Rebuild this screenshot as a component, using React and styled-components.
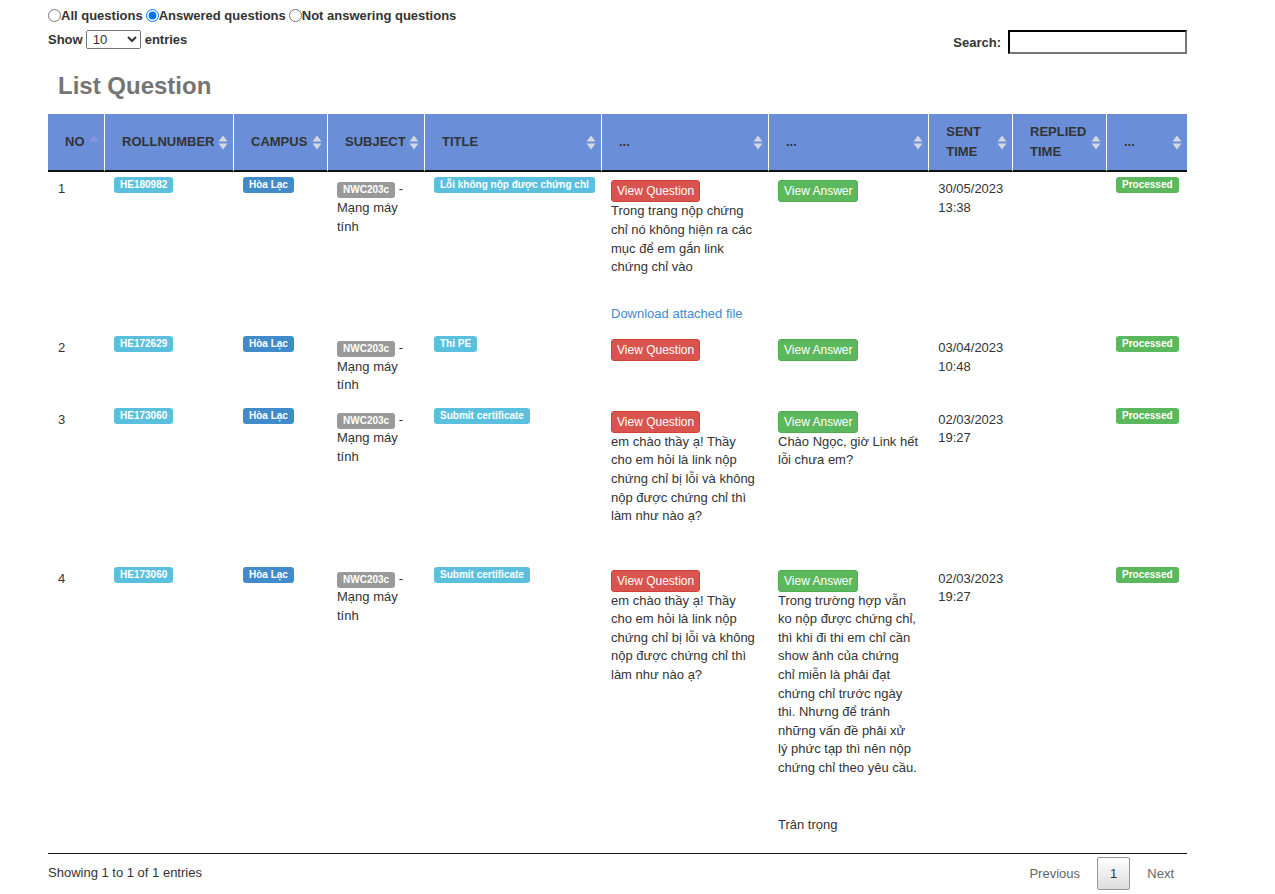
import React from 'react'
import styled, { createGlobalStyle } from 'styled-components'

const GlobalStyle = createGlobalStyle`
  body {
    margin: 0;
    background: #fff;
    color: #333;
    font-family: "Liberation Sans", Arial, sans-serif;
    font-size: 13px;
  }
`

const badgeColors = {
  info: '#5bc0de',
  primary: '#428bca',
  default: '#999999',
  success: '#5cb85c'
}

const columns = [
  { label: 'NO', width: 56, sort: 'asc' },
  { label: 'ROLLNUMBER', width: 129 },
  { label: 'CAMPUS', width: 94 },
  { label: 'SUBJECT', width: 97 },
  { label: 'TITLE', width: 177 },
  { label: '...', width: 167 },
  { label: '...', width: 160.25 },
  { label: 'SENT TIME', width: 83.75 },
  { label: 'REPLIED TIME', width: 94 },
  { label: '...', width: 81 }
]

const sameQuestion = 'em chào thầy ạ! Thầy cho em hỏi là link nộp chứng chỉ bị lỗi và không nộp được chứng chỉ thì làm như nào ạ?'

const rows = [
  {
    no: 1, roll: 'HE180982', campus: 'Hòa Lạc', subject: 'NWC203c', subjectName: 'Mạng máy tính',
    title: 'Lỗi không nộp được chứng chỉ',
    question: 'Trong trang nộp chứng chỉ nó không hiện ra các mục để em gắn link chứng chỉ vào',
    file: true, answer: '', sent: ['30/05/2023', '13:38']
  },
  {
    no: 2, roll: 'HE172629', campus: 'Hòa Lạc', subject: 'NWC203c', subjectName: 'Mạng máy tính',
    title: 'Thi PE', question: '', answer: '', sent: ['03/04/2023', '10:48']
  },
  {
    no: 3, roll: 'HE173060', campus: 'Hòa Lạc', subject: 'NWC203c', subjectName: 'Mạng máy tính',
    title: 'Submit certificate', question: sameQuestion,
    answer: 'Chào Ngọc, giờ Link hết lỗi chưa em?', sent: ['02/03/2023', '19:27']
  },
  {
    no: 4, roll: 'HE173060', campus: 'Hòa Lạc', subject: 'NWC203c', subjectName: 'Mạng máy tính',
    title: 'Submit certificate', question: sameQuestion,
    answer: 'Trong trường hợp vẫn ko nộp được chứng chỉ, thì khi đi thi em chỉ cần show ảnh của chứng chỉ miễn là phải đạt chứng chỉ trước ngày thi. Nhưng để tránh những vấn đề phải xử lý phức tạp thì nên nộp chứng chỉ theo yêu cầu.',
    signature: 'Trân trọng',
    sent: ['02/03/2023', '19:27']
  }
]

const SortIcon = ({ dir }) => (
  <SortSvg width="10" height="15" viewBox="0 0 10 15">
    <path d="M0.5 6.5 L5 0.5 L9.5 6.5 Z" fill={dir === 'asc' ? '#8e95e4' : '#d5d8df'} />
    {!dir && <path d="M0.5 8.5 L9.5 8.5 L5 14.5 Z" fill="#d5d8df" />}
  </SortSvg>
)

const App = () => (
  <>
    <GlobalStyle />
    <Page>
      <FilterRow>
        <RadioLabel><Radio type="radio" name="filter" />All questions</RadioLabel>
        <RadioLabel><Radio type="radio" name="filter" defaultChecked />Answered questions</RadioLabel>
        <RadioLabel><Radio type="radio" name="filter" />Not answering questions</RadioLabel>
      </FilterRow>

      <Controls>
        <LengthControl>
          Show
          <Select defaultValue="10">
            <option value="10">10</option>
            <option value="25">25</option>
            <option value="50">50</option>
          </Select>
          entries
        </LengthControl>
        <SearchControl>
          Search:
          <SearchInput type="search" />
        </SearchControl>
      </Controls>

      <Title>List Question</Title>

      <Table>
        <colgroup>
          {columns.map((c, i) => <col key={i} style={{ width: c.width }} />)}
        </colgroup>
        <thead>
          <tr>
            {columns.map((c, i) => (
              <Th key={i}>
                <ThInner>
                  <span>{c.label}</span>
                  <SortIcon dir={c.sort} />
                </ThInner>
              </Th>
            ))}
          </tr>
        </thead>
        <tbody>
          {rows.map(r => (
            <tr key={r.no}>
              <Td>{r.no}</Td>
              <Td><Badge $variant="info" $top>{r.roll}</Badge></Td>
              <Td><Badge $variant="primary" $top>{r.campus}</Badge></Td>
              <Td><Badge $variant="default">{r.subject}</Badge> - {r.subjectName}</Td>
              <Td><Badge $variant="info" $top>{r.title}</Badge></Td>
              <Td>
                <Stack>
                  <Button $variant="danger">View Question</Button>
                  {r.question && <QuestionText>{r.question}</QuestionText>}
                  {r.file && <FileLink href="#">Download attached file</FileLink>}
                </Stack>
              </Td>
              <Td>
                <Stack>
                  <Button $variant="success">View Answer</Button>
                  {r.answer && <AnswerText>{r.answer}</AnswerText>}
                  {r.signature && <Signature>{r.signature}</Signature>}
                </Stack>
              </Td>
              <Td><DateLine>{r.sent[0]}</DateLine><DateLine>{r.sent[1]}</DateLine></Td>
              <Td></Td>
              <Td><Badge $variant="success" $top>Processed</Badge></Td>
            </tr>
          ))}
        </tbody>
      </Table>

      <Footer>
        <Info>Showing 1 to 1 of 1 entries</Info>
        <Pagination>
          <PageButton>Previous</PageButton>
          <PageButton $current>1</PageButton>
          <PageButton>Next</PageButton>
        </Pagination>
      </Footer>
    </Page>
  </>
)

export default App

const Page = styled.div`
  width: 1139px;
  margin-left: 48px;
  padding-top: 5px;
`

const FilterRow = styled.div`
  display: flex;
  align-items: center;
  gap: 3px;
  height: 20px;
  font-weight: bold;
`

const RadioLabel = styled.label`
  display: inline-flex;
  align-items: center;
`

const Radio = styled.input`
  width: 13px;
  height: 13px;
  margin: 0;
`

const Controls = styled.div`
  display: flex;
  justify-content: space-between;
  align-items: flex-start;
  margin-top: 5px;
  font-weight: bold;
`

const LengthControl = styled.label`
  display: flex;
  align-items: center;
  gap: 3px;
  height: 18px;
`

const Select = styled.select`
  width: 55px;
  height: 19px;
  margin: 0 1px 0 0;
  font-family: inherit;
  font-size: 13px;
  color: #333;
  padding: 0 2px;
`

const SearchControl = styled.label`
  display: flex;
  align-items: center;
  gap: 7px;
`

const SearchInput = styled.input`
  width: 179px;
  height: 24px;
  box-sizing: border-box;
  margin: 0;
  border: 2px inset #767676;
  border-top-color: #222;
  border-left-color: #222;
  font-family: inherit;
  font-size: 13px;
  outline: none;
`

const Title = styled.h3`
  margin: 19px 0 15px 10px;
  font-size: 24px;
  line-height: 26.4px;
  font-weight: bold;
  color: #747474;
`

const Table = styled.table`
  width: 1139px;
  table-layout: fixed;
  border-collapse: separate;
  border-spacing: 0;
  border-bottom: 1px solid #111;
`

const Th = styled.th`
  background: #6a8fd8;
  color: #333;
  font-size: 13px;
  font-weight: bold;
  line-height: 20px;
  text-align: left;
  vertical-align: middle;
  padding: 8px 5px 8px 17px;
  border-bottom: 2px solid #111;

  & + & {
    border-left: 1px solid #fff;
  }
`

const ThInner = styled.div`
  display: flex;
  align-items: center;
  justify-content: space-between;
  gap: 3px;
`

const SortSvg = styled.svg`
  flex-shrink: 0;
  display: block;
`

const Td = styled.td`
  padding: 8px 10px;
  vertical-align: top;
  line-height: 18.57px;
  font-size: 13px;
  color: #333;
`

const Badge = styled.span`
  display: inline;
  padding: 2px 6px 3px;
  border-radius: 3px;
  background: ${p => badgeColors[p.$variant]};
  color: #fff;
  font-size: 10px;
  font-weight: bold;
  line-height: 1;
  white-space: nowrap;
  vertical-align: ${p => (p.$top ? 'top' : 'baseline')};
`

const Stack = styled.div`
  display: flex;
  flex-direction: column;
  align-items: flex-start;
`

const Button = styled.button`
  display: block;
  height: 22px;
  padding: 1px 5px;
  border: 1px solid ${p => (p.$variant === 'danger' ? '#d43f3a' : '#4cae4c')};
  border-radius: 3px;
  background: ${p => (p.$variant === 'danger' ? '#d9534f' : '#5cb85c')};
  color: #fff;
  font-family: inherit;
  font-size: 12px;
  line-height: 18px;
  cursor: pointer;
`

const QuestionText = styled.div`
  margin-bottom: 28px;
`

const AnswerText = styled.div`
  margin-bottom: 10px;
`

const Signature = styled.div`
  margin-top: 29px;
  margin-bottom: 10px;
`

const FileLink = styled.a`
  display: block;
  color: #428bca;
  text-decoration: none;
`

const DateLine = styled.div`
  white-space: nowrap;
`

const Footer = styled.div`
  display: flex;
  justify-content: space-between;
  align-items: flex-start;
`

const Info = styled.div`
  padding-top: 10px;
  line-height: 18.57px;
`

const Pagination = styled.div`
  display: flex;
  align-items: center;
  gap: 4px;
  padding-top: 3px;
`

const PageButton = styled.span`
  display: block;
  padding: 6px 12px;
  line-height: 19px;
  border: 1px solid ${p => (p.$current ? '#979797' : 'transparent')};
  border-radius: 2px;
  background: ${p => (p.$current ? 'linear-gradient(to bottom, #fff 0%, #dcdcdc 100%)' : 'transparent')};
  color: ${p => (p.$current ? '#333' : '#666')};
  cursor: default;
`
